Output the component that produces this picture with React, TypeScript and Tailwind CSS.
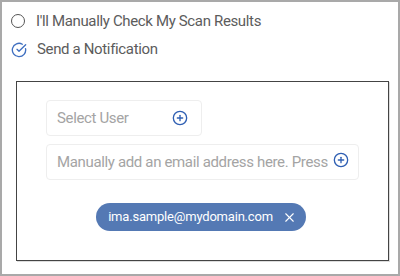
import { CircleCheckBig, CirclePlus, X } from 'lucide-react';

const font = { fontFamily: 'Roboto, "Liberation Sans", sans-serif' };

export default function App() {
  return (
    <div
      className="w-[400px] h-[276px] bg-white border-2 border-[#a9a9a9] flex flex-col"
      style={font}
    >
      {/* Options */}
      <div className="flex items-center gap-[11px] pl-[9px] pt-[5px] h-[33px]">
        <span className="w-[14px] h-[14px] rounded-full border-[1.5px] border-[#555] shrink-0" />
        <span className="text-[15px] tracking-[-0.35px] text-[#5c5c5c]">I'll Manually Check My Scan Results</span>
      </div>
      <div className="flex items-center gap-[10px] pl-[9px] h-[29px]">
        <CircleCheckBig size={16} strokeWidth={2} className="text-[#3f6fc0]" />
        <span className="text-[15px] tracking-[-0.35px] text-[#5c5c5c]">Send a Notification</span>
      </div>

      {/* Recipients box */}
      <div className="ml-[14px] mr-[9px] mt-[17px] h-[180px] border-[1.5px] border-[#444] shadow-[1px_1px_0_#ddd] flex flex-col">
        <div className="pl-[29px] pt-[18px] flex flex-col gap-[8px]">
          <div className="w-[156px] h-[36px] rounded-[4px] border border-[#eee] flex items-center justify-between pl-[10px] pr-[13px]">
            <span className="text-[15px] tracking-[-0.35px] text-[#a4a4a4]">Select User</span>
            <CirclePlus size={16} strokeWidth={2} className="text-[#2f5fb3]" />
          </div>
          <div className="w-[313px] h-[36px] rounded-[4px] border border-[#eee] flex items-center pl-[10px] overflow-hidden">
            <span className="text-[15px] tracking-[-0.35px] text-[#a4a4a4] whitespace-nowrap">Manually add an email address here. Press</span>
            <CirclePlus size={16} strokeWidth={2} className="text-[#2f5fb3] ml-[5px] -mt-[5px] shrink-0" />
          </div>
        </div>
        <div className="flex justify-center mt-[23px] pr-[3px]">
          <div className="h-[28px] rounded-full bg-[#5479b4] flex items-center pl-[12px] pr-[9px] gap-[9px]">
            <span className="text-[13px] tracking-[-0.2px] text-white">ima.sample@mydomain.com</span>
            <X size={15} strokeWidth={1.75} className="text-white" />
          </div>
        </div>
      </div>
    </div>
  );
}
